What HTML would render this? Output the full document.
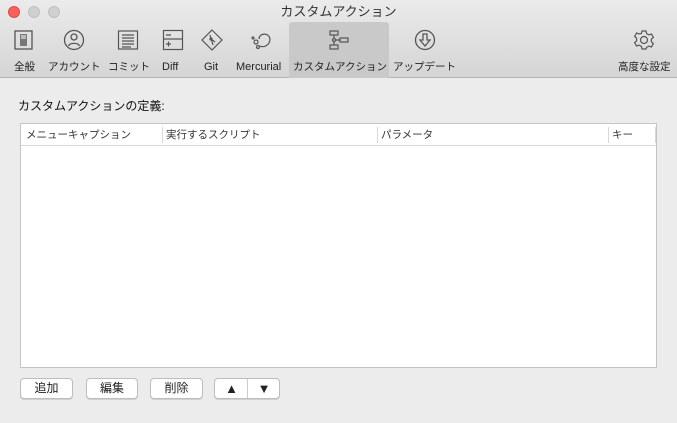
<!DOCTYPE html><html><head><meta charset="utf-8"><style>
*{margin:0;padding:0;box-sizing:border-box}
body{width:677px;height:423px;overflow:hidden;background:#ececec;font-family:"Liberation Sans","Noto Sans CJK JP",sans-serif;position:relative;font-size:11px;color:#222;line-height:1}
.tb{position:absolute;left:0;top:0;width:677px;height:78px;background:linear-gradient(#ebebeb,#d5d5d5);border-bottom:1px solid #b4b4b4}
.title{position:absolute;top:5px;left:0;width:677px;text-align:center;font-size:13px;line-height:14px;color:#333}
.dot{position:absolute;top:6px;width:12px;height:12px;border-radius:50%;background:#d0d0d0;border:1px solid #c0c0c0}
.sel{position:absolute;left:289px;top:22px;width:100px;height:56px;background:#c9c9c9;border-radius:3px 3px 0 0}
.lb{position:absolute;top:61px;font-size:10.5px;line-height:12px;color:#222;white-space:nowrap}
svg.i{position:absolute;top:29px}
.h{position:absolute;left:18px;top:99px;font-size:12px;line-height:14px;color:#111}
.tbl{position:absolute;left:20px;top:123px;width:637px;height:245px;background:#fff;border:1px solid #c4c4c4}
.hd{height:22px;border-bottom:1px solid #d6d6d6;position:relative;color:#333;font-size:10.5px;line-height:12px}
.hd span{position:absolute;top:5px}
.hd i{position:absolute;top:3px;width:1px;height:16px;background:#d8d8d8}
.b{position:absolute;top:378px;height:21px;background:#fff;border:1px solid #bdbdbd;border-radius:4px;font-size:12px;text-align:center;line-height:19px;box-shadow:0 1px 0 #d0d0d0}
.b span{font-size:13px}
</style></head><body>
<div class="tb">
<div class="dot" style="left:8px;background:#fc605c;border-color:#de4a44"></div>
<div class="dot" style="left:28px"></div><div class="dot" style="left:48px"></div>
<div class="title">カスタムアクション</div>
<div class="sel"></div>
<svg class="i" style="left:13px" width="22" height="22" viewBox="0 0 22 22" fill="none" stroke="#555" stroke-width="1.3"><rect x="2" y="2" width="17" height="18"/><rect x="7" y="5" width="7" height="12" fill="#777" stroke="none"/><rect x="8" y="6" width="5" height="4" fill="#bbb" stroke="none"/></svg>
<svg class="i" style="left:63px" width="22" height="22" viewBox="0 0 22 22" fill="none" stroke="#555" stroke-width="1.3"><circle cx="11" cy="11" r="9.5"/><circle cx="11" cy="8" r="3"/><path d="M5.5 17c1-3.5 10-3.5 11 0"/></svg>
<svg class="i" style="left:117px" width="22" height="22" viewBox="0 0 22 22" fill="none" stroke="#555" stroke-width="1.2"><rect x="1.5" y="2" width="19" height="18"/><path d="M5 6h12M5 9h12M5 12h12M5 15h12M5 18h9"/></svg>
<svg class="i" style="left:162px" width="22" height="22" viewBox="0 0 22 22" fill="none" stroke="#555" stroke-width="1.2"><rect x="1.5" y="1.5" width="19" height="19"/><path d="M1.5 10h19M4 6h5M4 15h5M6.5 12.5v5"/></svg>
<svg class="i" style="left:201px" width="22" height="22" viewBox="0 0 22 22" fill="none" stroke="#555" stroke-width="1.2"><path d="M11 1l10 10-10 10L1 11z"/><path d="M9 6l3 10M10 10l4 3"/><circle cx="10" cy="10" r="1"/></svg>
<svg class="i" style="left:250px" width="22" height="22" viewBox="0 0 22 22" fill="none" stroke="#555" stroke-width="1.2"><path d="M9 10c0-6 10-7 11 0c0 6-6 9-10 7"/><circle cx="6" cy="13" r="2"/><circle cx="8" cy="18" r="1.5"/><circle cx="3" cy="9" r="1"/></svg>
<svg class="i" style="left:328px" width="22" height="22" viewBox="0 0 22 22" fill="none" stroke="#555" stroke-width="1.2"><rect x="2" y="2" width="8" height="4"/><rect x="2" y="16" width="8" height="4"/><rect x="12" y="9" width="8" height="4"/><path d="M6 6v10M6 11h6"/><circle cx="6" cy="11" r="1.5" fill="#ccc"/></svg>
<svg class="i" style="left:414px" width="22" height="22" viewBox="0 0 22 22" fill="none" stroke="#555" stroke-width="1.3"><circle cx="11" cy="11" r="9.5"/><path d="M9 5h4v6h3l-5 6-5-6h3z"/></svg>
<svg class="i" style="left:633px" width="22" height="22" viewBox="0 0 22 22" fill="none" stroke="#555" stroke-width="1.2"><path d="M9 2h4l.6 2.6 2.3 1.3 2.5-.9 2 3.4-2 1.8v2.6l2 1.8-2 3.4-2.5-.9-2.3 1.3L13 20H9l-.6-2.6-2.3-1.3-2.5.9-2-3.4 2-1.8V9.2l-2-1.8 2-3.4 2.5.9L8.4 4.6z"/><circle cx="11" cy="11" r="3.5"/></svg>
<div class="lb" style="left:14px">全般</div>
<div class="lb" style="left:48px">アカウント</div>
<div class="lb" style="left:108px">コミット</div>
<div class="lb" style="left:162px;font-size:11px">Diff</div>
<div class="lb" style="left:204px;font-size:11px">Git</div>
<div class="lb" style="left:236px;font-size:11px">Mercurial</div>
<div class="lb" style="left:293px">カスタムアクション</div>
<div class="lb" style="left:393px">アップデート</div>
<div class="lb" style="left:618px">高度な設定</div>
</div>
<div class="h">カスタムアクションの定義:</div>
<div class="tbl"><div class="hd">
<span style="left:5px">メニューキャプション</span><i style="left:141px"></i>
<span style="left:145px">実行するスクリプト</span><i style="left:356px"></i>
<span style="left:360px">パラメータ</span><i style="left:587px"></i>
<span style="left:591px">キー</span><i style="left:634px"></i>
</div></div>
<div class="b" style="left:20px;width:53px">追加</div>
<div class="b" style="left:86px;width:52px">編集</div>
<div class="b" style="left:150px;width:53px">削除</div>
<div class="b" style="left:214px;width:66px"><span style="position:absolute;left:0;width:33px">▲</span><i style="position:absolute;left:32px;top:0;width:1px;height:19px;background:#ccc"></i><span style="position:absolute;left:33px;width:32px">▼</span></div>
</body></html>
